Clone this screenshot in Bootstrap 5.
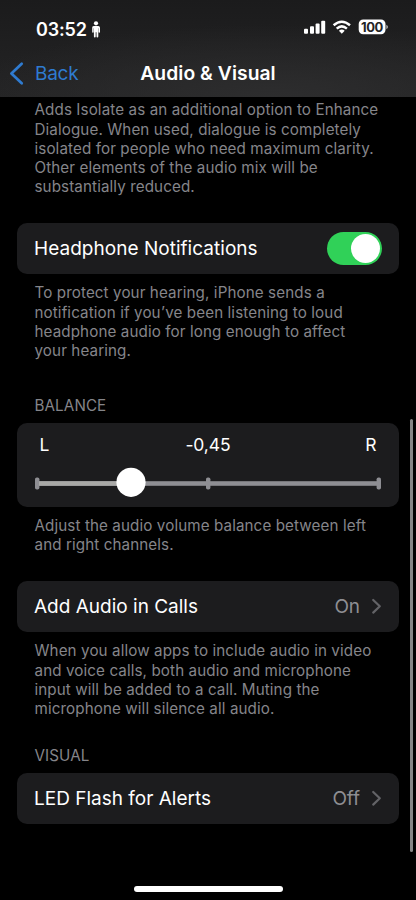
<!DOCTYPE html>
<html lang="en" data-bs-theme="dark">
<head>
<meta charset="utf-8">
<meta name="viewport" content="width=device-width, initial-scale=1">
<title>Audio &amp; Visual</title>
<link href="https://cdn.jsdelivr.net/npm/bootstrap@5.3.0/dist/css/bootstrap.min.css" rel="stylesheet">
<style>
body{background:#000;color:#fff;font-family:Inter,"Liberation Sans",sans-serif;font-size:19px;letter-spacing:-.1px}
.screen{width:416px;height:900px}
.top-area{height:97px;background:radial-gradient(ellipse 75% 75% at 65% 100%,#2d2d2e,rgba(45,45,46,0)),linear-gradient(#1b1b1c,#242425)}
.status{height:55px;padding:0 28px 0 36px}
.clock{font-size:18px;font-weight:600;line-height:20px;letter-spacing:-.15px}
.title-row{height:37px;display:grid;grid-template-columns:1fr auto 1fr}
.back-link{color:#2f7bd0;font-size:19px;letter-spacing:-.25px;line-height:26px}
.back-label{padding-top:1px}
.page-title{font-size:19.3px;font-weight:600;letter-spacing:.05px}
.page-body{padding:3.4px 17px 0}
.note,.section-label{color:#85858a;font-size:15.2px;font-weight:400;line-height:19.25px;letter-spacing:.1px;padding:0 17.5px;margin:0;white-space:nowrap}
.section-label{padding-top:1px}
.setting{background:#1c1c1e;border-radius:10px;height:51px;padding:0 17px;line-height:24px;letter-spacing:0}
.setting-text{padding-top:2px}
.wide-label{letter-spacing:.03px}
.toggle{width:55px;height:33px;border-radius:17px;background:#30d158;padding:2px}
.knob{width:29px;height:29px;border-radius:50%;background:#fff}
.balance{background:#1c1c1e;border-radius:10px;height:84px;padding:9px 17px 0}
.balance-labels{display:grid;grid-template-columns:1fr auto 1fr;padding:0 5.5px;font-size:17.5px;line-height:25px}
.value{color:#8e8e93;letter-spacing:-.1px}
.scroll-thumb{left:409.5px;top:419px;width:3.5px;height:433px;border-radius:2px;background:#858585}
.home-bar{left:134px;top:886px;width:148.5px;height:5.5px;border-radius:3px;background:#fff}
</style>
<script src="https://cdn.jsdelivr.net/npm/bootstrap@5.3.0/dist/js/bootstrap.bundle.min.js"></script>
</head>
<body>
<div class="screen position-relative overflow-hidden">
<header class="top-area">
  <div class="status d-flex align-items-center justify-content-between">
    <div class="d-flex align-items-center pt-1"><span class="clock">03:52</span>
      <svg class="ms-1" width="10" height="17" viewBox="0 0 10 17" fill="#fff"><circle cx="5" cy="2.3" r="2.1"/><path d="M2.8 5h4.4Q9 5 9 6.8v4.1q0 .8-.7.8t-.7-.8V7.3h-.3v8.3q0 .9-.9.9t-.9-.9v-4.4h-.8v4.4q0 .9-.9.9t-.9-.9V7.3h-.3v3.6q0 .8-.7.8t-.7-.8V6.8Q1 5 2.8 5z"/></svg>
    </div>
    <svg width="84" height="17" viewBox="0 0 84 17" fill="#fff">
      <rect x="0" y="9.8" width="4" height="5" rx="1"/><rect x="6" y="7.3" width="4" height="7.5" rx="1"/><rect x="11.6" y="4.6" width="4" height="10.2" rx="1"/><rect x="17.2" y="1.8" width="4" height="13" rx="1"/>
      <g fill="none" stroke="#fff" stroke-width="2.5"><path d="M29.6 6.2q8.2-7 16.4 0"/><path d="M32.7 9.6q5.1-4.4 10.2 0"/></g><path d="M34.9 11.7q2.9-2.2 5.8 0l-2.9 3z"/>
      <rect x="54.7" y=".5" width="26.8" height="14.8" rx="4.5"/><path d="M82.3 5.7q1.7.7 1.7 2.3t-1.7 2.3z" opacity=".65"/>
      <text x="67.9" y="12.6" text-anchor="middle" fill="#242425" font-size="13" font-weight="700" letter-spacing="-.5">100</text>
    </svg>
  </div>
  <nav class="title-row align-items-center">
    <a class="back-link d-flex align-items-center text-decoration-none" href="#"><svg width="35" height="26" viewBox="0 0 35 26" fill="none" stroke="#2f7bd0" stroke-width="2.7" stroke-linecap="round" stroke-linejoin="round"><path d="M21.7 2.7 11.4 12.5l10.3 9.8"/></svg><span class="back-label">Back</span></a>
    <span class="page-title">Audio &amp; Visual</span>
  </nav>
</header>
<main class="page-body">
  <p class="note">Adds Isolate as an additional option to Enhance<br>Dialogue. When used, dialogue is completely<br>isolated for people who need maximum clarity.<br>Other elements of the audio mix will be<br>substantially reduced.</p>
  <div class="setting d-flex align-items-center justify-content-between" style="margin-top:26.3px"><span class="setting-text wide-label">Headphone Notifications</span><span class="toggle d-flex align-items-center justify-content-end"><span class="knob"></span></span></div>
  <p class="note" style="margin-top:9.4px">To protect your hearing, iPhone sends a<br>notification if you’ve been listening to loud<br>headphone audio for long enough to affect<br>your hearing.</p>
  <h2 class="section-label" style="margin-top:35px">BALANCE</h2>
  <div class="balance" style="margin-top:7px">
    <div class="balance-labels"><span>L</span><span>-0,45</span><span class="text-end">R</span></div>
    <svg class="d-block mt-2" width="348" height="34" viewBox="0 0 348 34"><g fill="#8e8e93"><rect x="3" y="16.2" width="340" height="4.6"/><rect x="1" y="12.5" width="4.4" height="12" rx="1.8"/><rect x="172" y="12.5" width="4.4" height="12" rx="1.8"/><rect x="342.6" y="12.5" width="4.4" height="12" rx="1.8"/></g><path d="M5 18.5h90" stroke="#a9a9a7" stroke-width="4.6"/><circle cx="97" cy="17.3" r="14.6" fill="#fff"/></svg>
  </div>
  <p class="note" style="margin-top:9.5px">Adjust the audio volume balance between left<br>and right channels.</p>
  <div class="setting d-flex align-items-center" style="margin-top:26.2px"><span class="setting-text me-auto">Add Audio in Calls</span><span class="setting-text value">On</span><svg width="22" height="18" viewBox="0 0 22 18" fill="none" stroke="#636367" stroke-width="2.2" stroke-linecap="round" stroke-linejoin="round"><path d="m13.2 3 6.6 6.3-6.6 6.3"/></svg></div>
  <p class="note" style="margin-top:9.5px">When you allow apps to include audio in video<br>and voice calls, both audio and microphone<br>input will be added to a call. Muting the<br>microphone will silence all audio.</p>
  <h2 class="section-label" style="margin-top:27px">VISUAL</h2>
  <div class="setting d-flex align-items-center" style="margin-top:7px"><span class="setting-text me-auto">LED Flash for Alerts</span><span class="setting-text value">Off</span><svg width="22" height="18" viewBox="0 0 22 18" fill="none" stroke="#636367" stroke-width="2.2" stroke-linecap="round" stroke-linejoin="round"><path d="m13.2 3 6.6 6.3-6.6 6.3"/></svg></div>
</main>
<div class="scroll-thumb position-absolute"></div>
<div class="home-bar position-absolute"></div>
</div>
</body>
</html>
